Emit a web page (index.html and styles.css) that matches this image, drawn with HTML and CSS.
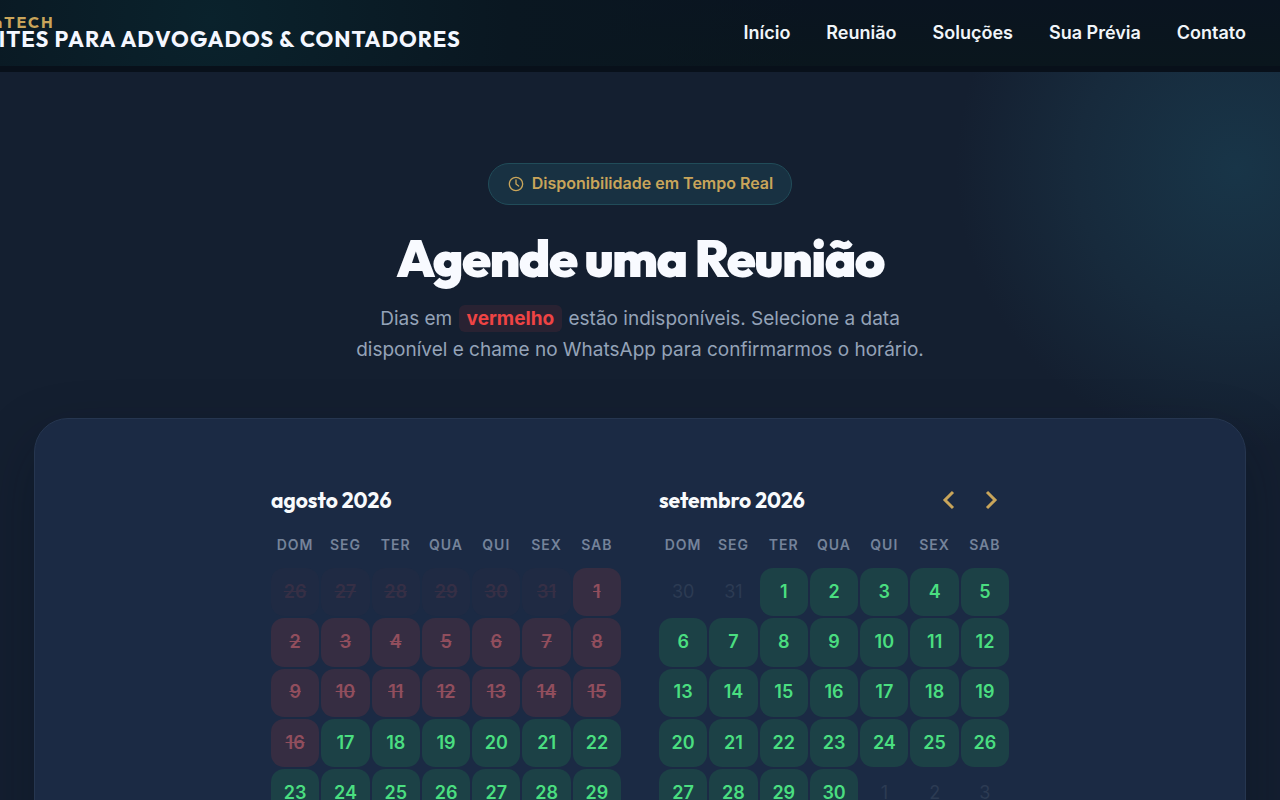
FILE: index.html
```html
<!DOCTYPE html>
<html lang="pt-BR">
<head>
<meta charset="utf-8">
<meta name="viewport" content="width=device-width, initial-scale=1">
<title>Agende uma Reunião</title>
<link rel="stylesheet" href="styles.css">
</head>
<body>
<header class="topbar">
  <a class="brand" href="#">
    <span class="brand-name">nTECH</span>
    <span class="brand-tagline">SITES PARA ADVOGADOS &amp; CONTADORES</span>
  </a>
  <nav class="nav">
    <a href="#inicio">Início</a>
    <a href="#reuniao">Reunião</a>
    <a href="#solucoes">Soluções</a>
    <a href="#previa">Sua Prévia</a>
    <a href="#contato">Contato</a>
  </nav>
</header>
<main class="section" id="reuniao">
  <div class="intro">
    <div class="badge">
      <svg class="badge-icon" viewBox="0 0 24 24" aria-hidden="true"><circle cx="12" cy="12" r="10"/><path d="M12 6v6l4 3"/></svg>
      <span>Disponibilidade em Tempo Real</span>
    </div>
    <h1 class="title">Agende uma Reunião</h1>
    <p class="lead">Dias em <strong class="red">vermelho</strong> estão indisponíveis. Selecione a data disponível e chame no WhatsApp para confirmarmos o horário.</p>
  </div>
  <div class="card">
    <div class="months" id="months">
      <section class="month">
        <div class="month-head"><h2>agosto 2026</h2></div>
        <div class="week"><span>DOM</span><span>SEG</span><span>TER</span><span>QUA</span><span>QUI</span><span>SEX</span><span>SAB</span></div>
        <div class="days" data-before="26-31" data-total="31" data-blocked="16" data-after="5"></div>
      </section>
      <section class="month">
        <div class="month-head"><h2>setembro 2026</h2>
          <div class="arrows">
            <button type="button" aria-label="Mês anterior"><svg viewBox="0 0 24 24"><path d="M16 4 8 12l8 8"/></svg></button>
            <button type="button" aria-label="Próximo mês"><svg viewBox="0 0 24 24"><path d="m8 4 8 8-8 8"/></svg></button>
          </div>
        </div>
        <div class="week"><span>DOM</span><span>SEG</span><span>TER</span><span>QUA</span><span>QUI</span><span>SEX</span><span>SAB</span></div>
        <div class="days" data-before="30-31" data-total="30" data-blocked="0" data-after="3"></div>
      </section>
    </div>
  </div>
</main>
<script src="calendar.js"></script>
</body>
</html>
```

FILE: styles.css
```css
* { box-sizing: border-box; }
html { background: #141e30; }
body {
  margin: 0;
  font-family: Inter, "Liberation Sans", sans-serif;
  color: #f8fafc;
}
.topbar {
  display: flex;
  align-items: center;
  justify-content: space-between;
  height: 72px;
  padding: 0 34px 0 0;
  border-bottom: 6px solid #08101a;
  background: radial-gradient(circle at 210px 20px, #0a222c 0, #0a1721 300px, transparent 600px), linear-gradient(#0a1420, #0a161d);
}
.brand {
  display: flex;
  flex-direction: column;
  margin-left: -15px;
  padding-bottom: 4px;
  font-family: Outfit, Lato, sans-serif;
  color: #f4f7ff;
  text-decoration: none;
  white-space: nowrap;
}
.brand-name {
  padding-left: 8px;
  font-size: 16px;
  line-height: 16px;
  font-weight: 700;
  letter-spacing: 2px;
  color: #c9a55a;
}
.brand-tagline {
  font-size: 22px;
  line-height: 18px;
  font-weight: 700;
  letter-spacing: 1px;
}
.nav { display: flex; gap: 36px; }
.nav a {
  font-size: 18px;
  line-height: 24px;
  font-weight: 600;
  color: #f1f5f9;
  text-decoration: none;
}
.section {
  padding: 91px 34px 0;
  background: radial-gradient(circle at 1236px 96px, #183548 0, #172a3c 160px, #141f30 280px);
}
.intro {
  display: flex;
  flex-direction: column;
  align-items: center;
  text-align: center;
}
.badge {
  display: flex;
  align-items: center;
  gap: 8px;
  height: 42px;
  padding: 0 18px 0 19px;
  border: 1px solid #214c59;
  border-radius: 21px;
  background: #183142;
  font-size: 16px;
  line-height: 20px;
  font-weight: 600;
  color: #c9a55a;
}
.badge span { padding-bottom: 2px; }
.badge-icon {
  width: 16px;
  height: 16px;
  fill: none;
  stroke: currentColor;
  stroke-width: 2;
  stroke-linecap: round;
  stroke-linejoin: round;
}
.title {
  margin: 20px 0 0;
  font-family: Outfit, Lato, sans-serif;
  font-size: 52px;
  line-height: 66px;
  font-weight: 900;
  letter-spacing: -0.03em;
  color: #f8faff;
}
.lead {
  max-width: 600px;
  margin: 12px 0 53px;
  font-size: 19px;
  line-height: 31px;
  color: #94a3b8;
}
.red {
  margin: 0 1px;
  padding: 2px 8px;
  border-radius: 6px;
  background: rgba(239, 68, 68, 0.1);
  font-weight: 700;
  color: #ef4444;
}
.card {
  padding: 64px 34px;
  border: 1px solid #263650;
  border-radius: 34px;
  background: #1b2a44;
  box-shadow: 0 24px 60px rgba(8, 14, 26, 0.3);
}
.months {
  display: grid;
  grid-template-columns: 350px 350px;
  justify-content: center;
  gap: 38px;
}
.month-head {
  display: flex;
  align-items: center;
  justify-content: space-between;
  height: 34px;
}
.month-head h2 {
  margin: 0;
  font-family: Outfit, Lato, sans-serif;
  font-size: 21px;
  line-height: 26px;
  font-weight: 700;
}
.arrows { display: flex; gap: 6px; }
.arrows button {
  display: grid;
  place-items: center;
  width: 36px;
  height: 32px;
  padding: 0;
  border: 0;
  background: none;
}
.arrows svg {
  width: 24px;
  height: 24px;
  fill: none;
  stroke: #c9a55a;
  stroke-width: 3;
}
.week, .days {
  display: grid;
  grid-template-columns: repeat(7, 1fr);
  gap: 2px;
}
.week {
  padding: 18px 0 13px;
  font-size: 14px;
  line-height: 20px;
  font-weight: 600;
  letter-spacing: 1px;
  text-align: center;
  color: #75839a;
}
.day {
  aspect-ratio: 1;
  padding: 0 0 2px;
  border: 0;
  border-radius: 13px;
  background: #1c4146;
  font: 600 18px Inter, sans-serif;
  color: #4ade80;
}
.day.blocked { background: #362d42; color: #914e5d; text-decoration: line-through; }
.day.outside { background: none; color: #2c3b53; font-weight: 400; }
.day.outside.blocked { background: #1f2a43; color: #362f45; font-weight: 600; }
```

FILE: calendar.js
```javascript
document.querySelectorAll(".days").forEach((grid) => {
  const { before, total, blocked, after } = grid.dataset;
  const [first, last] = before.split("-").map(Number);
  const limit = Number(blocked);
  const add = (number, classes) => {
    const day = document.createElement("button");
    day.type = "button";
    day.className = ["day", ...classes].join(" ");
    day.textContent = number;
    grid.append(day);
  };
  for (let n = first; n <= last; n++) add(n, limit ? ["outside", "blocked"] : ["outside"]);
  for (let n = 1; n <= Number(total); n++) add(n, n <= limit ? ["blocked"] : []);
  for (let n = 1; n <= Number(after); n++) add(n, ["outside"]);
});
```
